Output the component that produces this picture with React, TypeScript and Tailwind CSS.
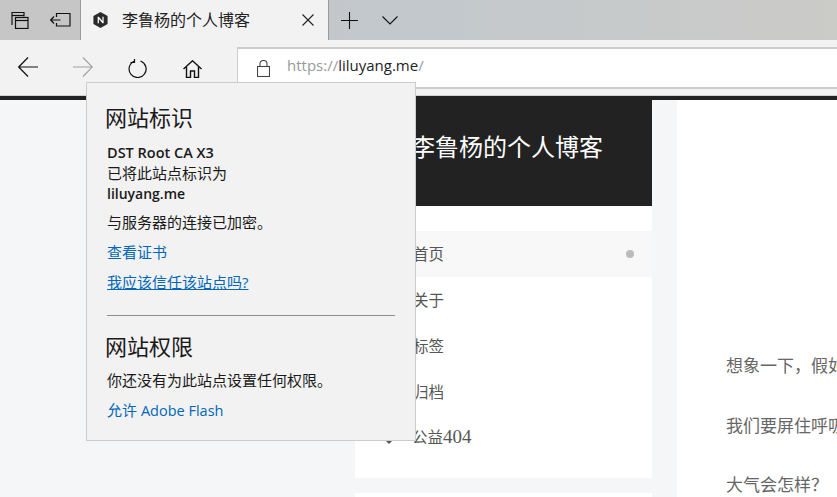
const uiFont = { fontFamily: '"Open Sans", "Noto Sans CJK SC", sans-serif' };

const navItems = ["首页", "关于", "标签", "归档", "公益"];

function TitleBar() {
  return (
    <div className="flex h-10 bg-gradient-to-r from-[#c5c5c5] via-[#c3c8cc] to-[#cbcbc8]">
      <div className="flex w-[81px] shrink-0 items-center bg-[#c6c6c6] border-r border-[#9a9a9a]">
        <svg width="18" height="18" viewBox="0 0 18 18" className="ml-[11px]" fill="none" stroke="#111" strokeWidth="1.2">
          <path d="M1.500 13.500H1V1.500h12v4" />
          <path d="M1 4.500h12" />
          <rect x="4.500" y="6.500" width="12.500" height="11" />
          <path d="M4.500 9.500h12.500" />
        </svg>
        <svg width="21" height="16" viewBox="0 0 21 16" className="ml-[21px]" fill="none" stroke="#111" strokeWidth="1.2">
          <path d="M6.500 5V1.500H20v12.500H6.500v-3" />
          <path d="M0.500 8h10M4 4.500L0.700 8 4 11.500" />
        </svg>
      </div>
      <div style={uiFont} className="flex w-[248px] shrink-0 items-center bg-[#f2f2f2] border-r border-[#9a9a9a] text-[16px] text-[#222]">
        <svg width="17" height="18" viewBox="0 0 18 18" className="ml-[11px] mr-[13px]">
          <path d="M9 0.500l7.500 4.200v8.600L9 17.500l-7.500-4.200V4.700z" fill="#2a2a2a" />
          <path d="M6 12.500V5.500h1.200L11 10V5.500h1.300v7H11.100L7.300 8v4.500z" fill="#fff" />
        </svg>
        <span className="flex-1">李鲁杨的个人博客</span>
        <svg width="12" height="12" viewBox="0 0 12 12" className="mr-[14px]" fill="none" stroke="#222" strokeWidth="1.1">
          <path d="M0.500 0.500l11 11M11.500 0.500l-11 11" />
        </svg>
      </div>
      <div className="flex items-center">
        <svg width="17" height="17" viewBox="0 0 17 17" className="ml-[12px]" fill="none" stroke="#111" strokeWidth="1.1">
          <path d="M0 8.500h17M8.500 0v17" />
        </svg>
        <svg width="16" height="9" viewBox="0 0 16 9" className="ml-[24px]" fill="none" stroke="#111" strokeWidth="1.1">
          <path d="M0.500 0.500L8 8l7.500-7.500" />
        </svg>
      </div>
    </div>
  );
}

function ToolBar() {
  return (
    <div className="flex h-[56px] bg-[#f2f2f2] border-b border-[#d0d0d0]">
      <div className="flex w-[237px] shrink-0 items-center">
        <svg width="20" height="20" viewBox="0 0 20 20" className="ml-[18px] mt-[-1px]" fill="none" stroke="#111" strokeWidth="1.2">
          <path d="M0.500 10H20M10 0.500L0.700 10l9.300 9.500" />
        </svg>
        <svg width="20" height="20" viewBox="0 0 20 20" className="ml-[35px] mt-[-1px]" fill="none" stroke="#a0a0a0" strokeWidth="1.1">
          <path d="M0 10h19.500M10 0.500l9.300 9.500-9.300 9.500" />
        </svg>
        <svg width="19" height="19" viewBox="0 0 19 19" className="ml-[35px] mt-[2px]" fill="none" stroke="#111" strokeWidth="1.2">
          <path d="M6.200 2.200A8.500 8.500 0 1 0 12.500 2" />
          <path d="M6.500 0v3.500H2.500" />
        </svg>
        <svg width="19" height="18" viewBox="0 0 19 18" className="ml-[36px] mt-[2px]" fill="none" stroke="#111" strokeWidth="1.4">
          <path d="M0.500 9L9.500 0.800l9 8.200" />
          <path d="M3.500 7v10.500h4v-6.500h4v6.500h4V7" />
        </svg>
      </div>
      <div className="mt-[7px] flex h-[42px] flex-1 items-center bg-white border-y-2 border-l border-[#cccccc]">
        <svg width="13" height="17" viewBox="0 0 13 17" className="ml-[19px]" fill="none" stroke="#444" strokeWidth="1.1">
          <rect x="0.500" y="6.500" width="12" height="10" />
          <path d="M3 6.500V4a3.500 3.500 0 0 1 7 0v2.500" />
        </svg>
        <span style={uiFont} className="mb-[5px] ml-[17px] text-[15px] text-[#9a9a9a]">
          https://<span className="text-[#222]">liluyang.me</span>/
        </span>
      </div>
    </div>
  );
}

function Sidebar() {
  return (
    <div className="w-[297px] shrink-0" style={{ fontFamily: '"Liberation Serif", "Noto Sans CJK SC", serif' }}>
      <div style={{ fontFamily: '"Noto Sans CJK SC", sans-serif' }} className="flex h-[106px] items-center bg-[#222222] pb-[14px] pl-[56px] text-[24px] text-white">
        李鲁杨的个人博客
      </div>
      <div className="h-[272px] bg-white pt-[25px] text-[15.5px] text-[#555555]">
        {navItems.map((item, i) => (
          <div key={item} className={`flex h-[46px] items-center pl-[28px] ${i === 0 ? "bg-[#f8f8f8]" : ""}`}>
            <svg width="12" height="12" viewBox="0 0 12 12" className="mr-[18px]" fill="#555">
              {i === 4 && <path d="M1 7h10L6 12z" />}
            </svg>
            <span className={`flex-1 ${i === 4 ? "ml-[-1px] mb-[1px]" : "mt-[2px]"}`}>
              {item}
              {i === 4 && <span className="text-[19px] leading-none">404</span>}
            </span>
            {i === 0 && <span className="mr-[18px] h-2 w-2 rounded-full bg-[#bbbbbb]" />}
          </div>
        ))}
      </div>
      <div className="mt-[15px] h-20 bg-white" />
    </div>
  );
}

function Article() {
  return (
    <div style={{ fontFamily: '"Noto Sans CJK SC", sans-serif' }} className="ml-[25px] flex-1 overflow-hidden bg-white pl-[49px] pt-[253px] text-[17px] text-[#666666]">
      <p className="mb-[36px] h-6 leading-6 whitespace-nowrap">想象一下，假如地球的大气层消失了</p>
      <p className="mb-[35px] h-6 leading-6 whitespace-nowrap">我们要屏住呼吸多久才能活下来</p>
      <p className="h-6 leading-6 whitespace-nowrap">大气会怎样？</p>
    </div>
  );
}

function SitePopup() {
  return (
    <div style={uiFont} className="absolute left-[86px] top-[82px] h-[359px] w-[330px] bg-[#f2f2f2] border border-[#cccccc] pl-[20px] pr-[20px] pt-[19px] text-[15px] text-[#1a1a1a]">
      <h2 className="ml-[-2px] text-[22px] leading-[30px]">网站标识</h2>
      <p className="mt-[11px] text-[14.5px] font-semibold leading-[20px]">DST Root CA X3</p>
      <p className="leading-[20px]">已将此站点标识为</p>
      <p className="text-[14px] font-semibold leading-[21px]">liluyang.me</p>
      <p className="mt-[8px] leading-[20px]">与服务器的连接已加密。</p>
      <p className="mt-[10px] leading-[20px] text-[#0067b8]">查看证书</p>
      <p className="mt-[10px] leading-[20px] text-[#0067b8] underline">我应该信任该站点吗?</p>
      <div className="mt-[23px] h-px bg-[#8f8f8f]" />
      <h2 className="ml-[-2px] mt-[15px] text-[22px] leading-[30px]">网站权限</h2>
      <p className="mt-[9px] leading-[20px]">你还没有为此站点设置任何权限。</p>
      <p className="mt-[10px] leading-[20px] text-[#0067b8]">
        允许 <span className="text-[14.5px]">Adobe Flash</span>
      </p>
    </div>
  );
}

export default function App() {
  return (
    <div className="relative h-[497px] w-[837px] overflow-hidden bg-[#f5f6f8]">
      <TitleBar />
      <ToolBar />
      <div className="h-1 bg-[#222222]" />
      <div className="flex h-[397px] pl-[355px]">
        <Sidebar />
        <Article />
      </div>
      <SitePopup />
    </div>
  );
}
